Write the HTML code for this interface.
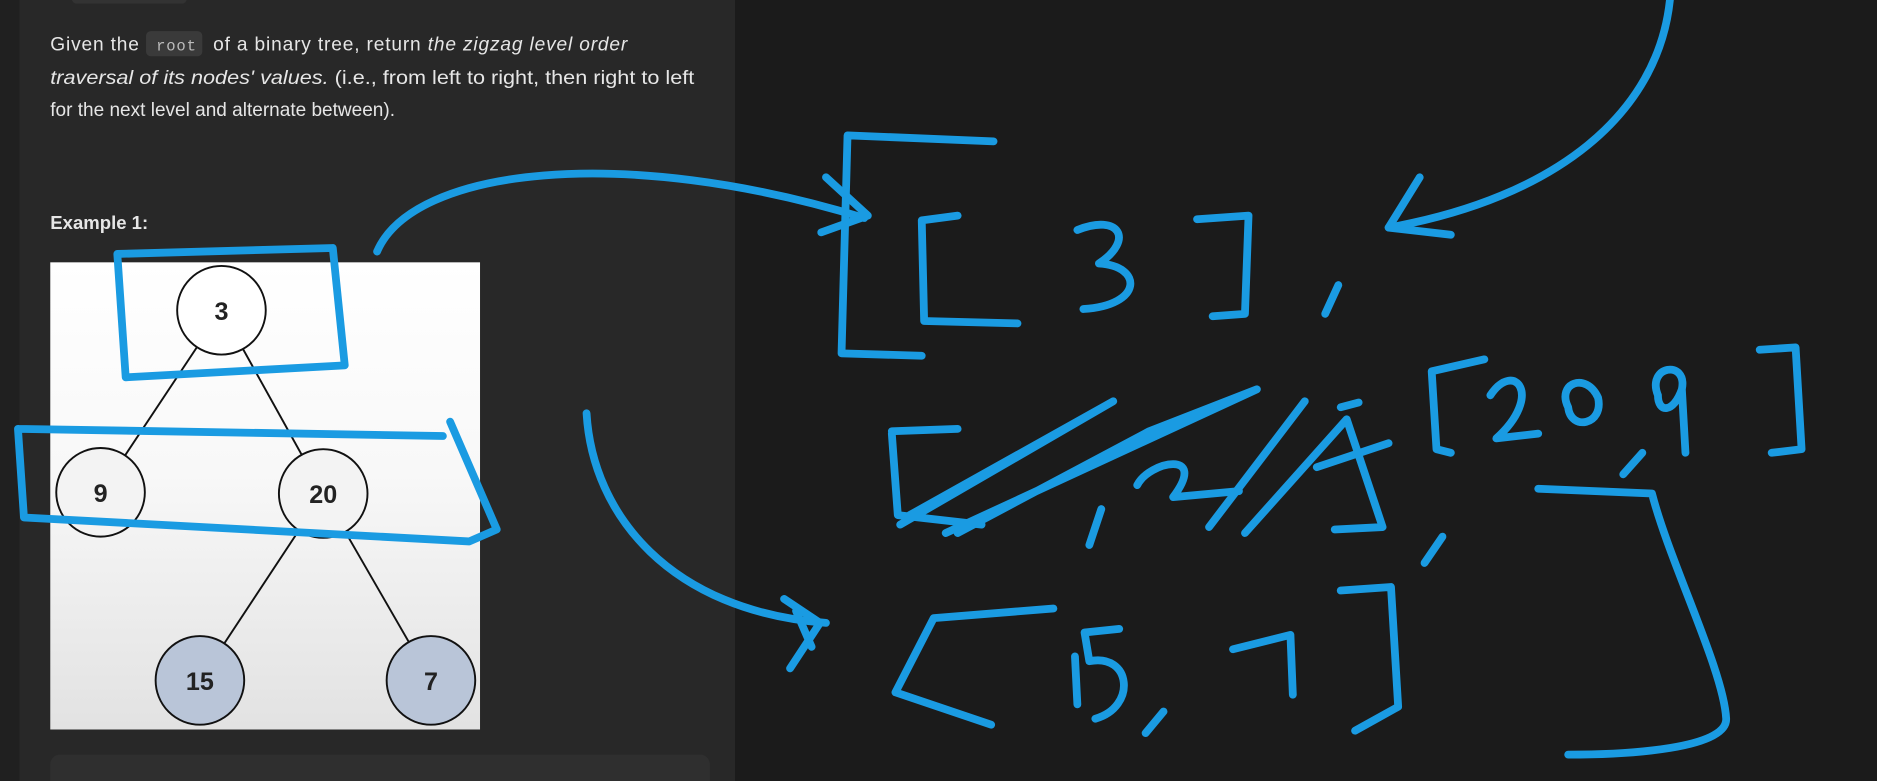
<!DOCTYPE html>
<html><head><meta charset="utf-8"><style>
html,body{margin:0;padding:0;background:#1b1b1b;overflow:hidden}
svg{display:block}
</style></head><body>
<svg width="1877" height="781" viewBox="0 0 1568 652" preserveAspectRatio="none" xmlns="http://www.w3.org/2000/svg">
<defs>
<linearGradient id="g" x1="0" y1="0" x2="0" y2="1">
<stop offset="0" stop-color="#ffffff"/><stop offset="0.45" stop-color="#f8f8f8"/><stop offset="1" stop-color="#e2e2e2"/>
</linearGradient>
</defs>
<rect x="0" y="0" width="1568" height="652" fill="#1b1b1b"/>
<rect x="16" y="0" width="598" height="652" fill="#282828"/>
<rect x="0" y="0" width="16" height="652" fill="#202020"/>
<rect x="60" y="-8" width="96" height="11" rx="4" fill="#333"/>
<g font-family="Liberation Sans, sans-serif" font-size="16" fill="#e6e6e6">
<rect x="122" y="26" width="47" height="21" rx="4" fill="#3a3a3a"/>
<text x="42" y="42" textLength="482" lengthAdjust="spacing">Given the <tspan font-family="Liberation Mono, monospace" font-size="13" fill="#bbb">&#160;root&#160;</tspan> of a binary tree, return <tspan font-style="italic">the zigzag level order</tspan></text>
<text x="42" y="70" textLength="538" lengthAdjust="spacingAndGlyphs"><tspan font-style="italic">traversal of its nodes' values.</tspan> (i.e., from left to right, then right to left</text>
<text x="42" y="97" textLength="288" lengthAdjust="spacingAndGlyphs">for the next level and alternate between).</text>
<text x="42" y="191" font-weight="bold" font-size="15.5">Example 1:</text>
</g>
<rect x="42" y="219" width="359" height="390" fill="url(#g)"/>
<g stroke="#111" stroke-width="1.6">
<line x1="185" y1="259" x2="84" y2="411"/><line x1="185" y1="259" x2="270" y2="412"/>
<line x1="270" y1="412" x2="167" y2="568"/><line x1="270" y1="412" x2="360" y2="568"/>
<circle cx="185" cy="259" r="37" fill="#fff"/>
<circle cx="84" cy="411" r="37" fill="#f3f3f3"/>
<circle cx="270" cy="412" r="37" fill="#f3f3f3"/>
<circle cx="167" cy="568" r="37" fill="#b9c5d8"/>
<circle cx="360" cy="568" r="37" fill="#b9c5d8"/>
</g>
<g font-family="Liberation Sans, sans-serif" font-weight="bold" font-size="21" fill="#222" text-anchor="middle">
<text x="185" y="267">3</text><text x="84" y="419">9</text><text x="270" y="420">20</text><text x="167" y="576">15</text><text x="360" y="576">7</text>
</g>
<rect x="42" y="630" width="551" height="40" rx="8" fill="#2f2f2f"/>
<g fill="none" stroke="#1a9be2" stroke-width="6.5" stroke-linecap="round" stroke-linejoin="round">
<path d="M98,212 L278,207 L288,305 L105,315 Z"/>
<path d="M15,358 L370,364 M376,352 L415,442 L392,452 L20,432 L15,358"/>
<path d="M315,210 C345,140 520,120 722,182"/>
<path d="M690,148 L725,180 L686,194"/>
<path d="M1395,0 C1385,95 1300,165 1160,190"/>
<path d="M1186,148 L1160,190 L1212,196"/>
<path d="M830,118 L708,113 L703,295 L770,297"/>
<path d="M800,180 L770,184 L772,268 L850,270"/>
<path d="M900,192 C935,178 948,200 918,220 C955,222 955,255 905,258"/>
<path d="M1000,183 L1043,180 L1040,262 L1013,264"/>
<path d="M1118,238 L1107,262"/>
<path d="M1240,300 L1196,310 L1200,375 L1212,378"/>
<path d="M1245,330 C1265,300 1290,330 1250,366 L1285,362"/>
<path d="M1310,340 C1300,320 1325,310 1335,332 C1340,355 1312,360 1310,340"/>
<path d="M1385,330 C1375,305 1410,300 1405,325 C1398,345 1385,345 1385,330 M1405,325 L1408,378"/>
<path d="M1372,378 L1356,396"/>
<path d="M1470,292 L1500,290 L1505,375 L1480,378"/>
<path d="M745,362 L750,430 L820,438 M745,360 L800,358"/>
<path d="M752,438 L930,335 L760,430 M790,445 L1050,325 L960,360 L800,445"/>
<path d="M910,455 L920,425 M950,405 C960,385 1010,375 980,415 L1035,410"/>
<path d="M1010,440 L1090,335 M1040,445 L1125,350 L1155,440 L1115,442 M1100,390 L1160,370"/>
<path d="M1120,340 L1135,336"/>
<path d="M1205,448 L1190,470"/>
<path d="M1285,408 L1380,412 C1395,470 1440,560 1442,600 C1443,625 1360,630 1310,630"/>
<path d="M490,345 C495,430 560,510 690,520"/>
<path d="M655,500 L685,520 L660,558 M665,510 L678,540"/>
<path d="M880,508 L780,516 M780,516 L748,578 L828,605"/>
<path d="M898,548 L900,588 M935,525 L906,528 L910,552 C945,545 950,590 915,600"/>
<path d="M972,594 L957,612"/>
<path d="M1030,542 L1078,530 L1080,580"/>
<path d="M1120,493 L1162,490 L1168,590 L1132,610"/>
</g>
</svg>
</body></html>
